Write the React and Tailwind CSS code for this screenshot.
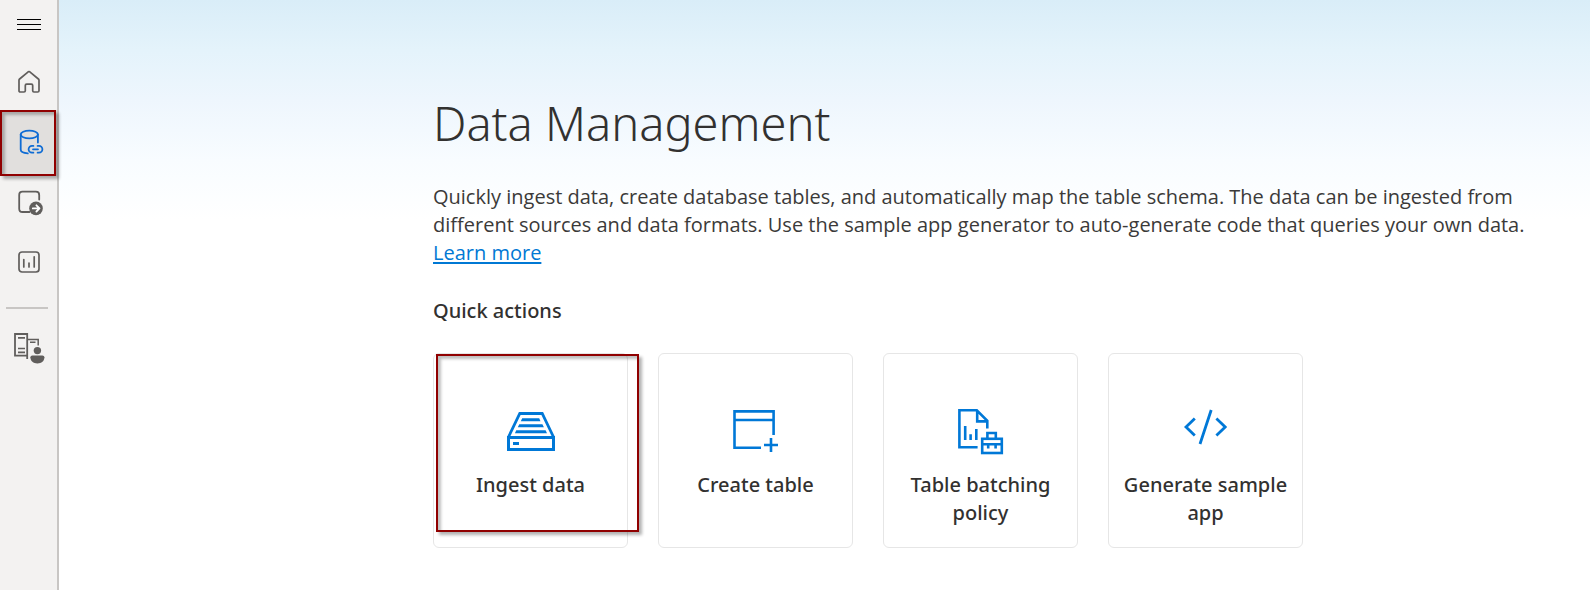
import React from "react";

const IngestIcon = () => (
  <svg className="h-[46px] w-[51px]" viewBox="0 0 51 46" fill="none" stroke="#0078d7" aria-hidden="true">
    <rect x="3.5" y="28.5" width="45" height="12" strokeWidth="3" />
    <path d="M3.5 28L14.8 4.5H37.2L48.5 28" strokeWidth="2.8" />
    <path d="M17.2 9.2H34.2L35.5 12.2H15.8ZM14.3 15.2H37.4L38.9 18.2H12.8ZM11.3 21.2H40.6L42 24.2H9.9ZM8 33H14V36H8Z" fill="#0078d7" stroke="none" />
  </svg>
);

const CreateTableIcon = () => (
  <svg className="h-[46px] w-[51px]" viewBox="0 0 51 46" fill="none" stroke="#0078d7" strokeWidth="2.6" aria-hidden="true">
    <path d="M31 38.8H4.5V2.4H43.6V26M4.5 11H43.6" />
    <path d="M41 29V43M34 36H48" />
  </svg>
);

const BatchingIcon = () => (
  <svg className="h-[46px] w-[51px]" viewBox="0 0 51 46" fill="none" stroke="#0078d7" strokeWidth="2.6" aria-hidden="true">
    <path d="M22.6 38.2H4.4V1.3H21.8L32.3 11.8V19.5M22.2 1.6V12.4H32.6" />
    <path d="M10.2 17V31M15.6 25.2V31M21.3 20V31" />
    <rect x="27.2" y="29.8" width="19.6" height="14.2" />
    <path d="M32.4 29V24H40.8V29M27 35.2H47M33.2 35V39.5M40.6 35V39.5" />
  </svg>
);

const CodeIcon = () => (
  <svg className="h-[46px] w-[51px]" viewBox="0 0 51 46" fill="none" stroke="#0078d7" strokeWidth="2.8" aria-hidden="true">
    <path d="M14.8 9.5L6 18L14.8 26.5M36.4 9.5L45.2 18L36.4 26.5M31.2 1L20 35" />
  </svg>
);

const HomeIcon = () => (
  <svg className="h-6 w-6" viewBox="0 0 24 24" fill="none" stroke="#605e5c" strokeWidth="1.7" strokeLinejoin="round" aria-hidden="true">
    <path d="M2 10.2Q2 9.5 2.6 9L11.2 1.8Q12 1.2 12.8 1.8L21.4 9Q22 9.5 22 10.2V20.7Q22 22 20.7 22H17Q15.7 22 15.7 20.7V15.5Q15.7 14.2 14.4 14.2H9.6Q8.3 14.2 8.3 15.5V20.7Q8.3 22 7 22H3.3Q2 22 2 20.7Z" />
  </svg>
);

const DataIcon = () => (
  <svg className="h-7 w-7" viewBox="0 0 28 28" fill="none" stroke="#0f6cd4" strokeWidth="1.8" strokeLinecap="round" aria-hidden="true">
    <ellipse cx="13.3" cy="6.5" rx="8.6" ry="3.9" />
    <path d="M4.7 6.5V21.6C4.7 23.6 7.8 25.2 11.8 25.4M21.9 6.5V14.5" />
    <path d="M17.4 17.9H16A3.4 3.4 0 0 0 16 24.7H17.4M21.6 17.9H23A3.4 3.4 0 0 1 23 24.7H21.6M17 21.3H22" />
  </svg>
);

const QueryIcon = () => (
  <svg className="h-7 w-7" viewBox="0 0 28 28" fill="none" stroke="#605e5c" strokeWidth="1.8" strokeLinecap="round" aria-hidden="true">
    <path d="M13.5 23H6.5Q3.2 23 3.2 19.7V6Q3.2 2.7 6.5 2.7H19.9Q23.2 2.7 23.2 6V10.5" />
    <circle cx="20" cy="19.4" r="6.8" fill="#605e5c" stroke="none" />
    <path d="M16.8 19.4H23.2M20.4 16.3L23.5 19.4L20.4 22.5" stroke="#fff" strokeLinejoin="round" />
  </svg>
);

const ChartIcon = () => (
  <svg className="h-6 w-6" viewBox="0 0 24 24" fill="none" stroke="#605e5c" strokeWidth="1.7" strokeLinecap="round" aria-hidden="true">
    <rect x="2" y="2" width="20" height="20" rx="3" />
    <path d="M6.8 9.5V17M12 13V17M17.2 6.8V17" />
  </svg>
);

const AdminIcon = () => (
  <svg className="h-8 w-8" viewBox="0 0 32 32" fill="none" stroke="#605e5c" strokeWidth="1.8" aria-hidden="true">
    <path d="M2 2H14.2V23.6H2ZM14.2 23V27" />
    <path d="M5 5.8H12M5 16.5H12M5 20.3H12" strokeWidth="1.7" />
    <path d="M14.5 7.4H25.2V13.5M17 10.3H22.5" strokeWidth="1.5" />
    <circle cx="24.4" cy="18.6" r="3.7" fill="#605e5c" stroke="none" />
    <path d="M19.4 23.4H29.4Q31.4 23.4 31.4 25.2C31.4 29 28.5 31.4 24.4 31.4S17.4 29 17.4 25.2Q17.4 23.4 19.4 23.4Z" fill="#605e5c" stroke="none" />
  </svg>
);

const actions = [
  { label: "Ingest data", Icon: IngestIcon, highlighted: true },
  { label: "Create table", Icon: CreateTableIcon },
  { label: "Table batching policy", Icon: BatchingIcon },
  { label: "Generate sample app", Icon: CodeIcon },
];

const Highlight = ({ className }) => (
  <span
    aria-hidden="true"
    className={`pointer-events-none absolute z-10 border-2 border-[#900000] shadow-[3px_3px_3px_rgba(0,0,0,0.3),inset_3px_3px_3px_rgba(0,0,0,0.25)] ${className}`}
  />
);

function NavItem({ label, children, className }) {
  return (
    <a href="#" aria-label={label} className={`flex items-center justify-center ${className}`}>
      {children}
    </a>
  );
}

function Sidebar() {
  return (
    <nav aria-label="Main" className="flex w-[59px] shrink-0 flex-col border-r-2 border-[#c8c6c4] bg-[#f3f2f1]">
      <button type="button" aria-label="Toggle navigation" className="flex h-[50px] items-center justify-center">
        <svg className="h-3 w-6" viewBox="0 0 24 12" stroke="#000" strokeWidth="1" aria-hidden="true">
          <path d="M0 .5H24M0 5.5H24M0 10.5H24" />
        </svg>
      </button>
      <NavItem label="Home" className="h-[60px] pt-1"><HomeIcon /></NavItem>
      <div className="relative h-[66px]">
        <NavItem label="Data" className="h-full bg-[#e1dfdd] pl-0.5 pb-0.5"><DataIcon /></NavItem>
        <Highlight className="inset-y-0 left-0 right-px" />
      </div>
      <NavItem label="Query" className="h-[56px] pl-0.5 pb-0.5"><QueryIcon /></NavItem>
      <NavItem label="Dashboards" className="h-[60px]"><ChartIcon /></NavItem>
      <hr className="mx-1.5 mt-[15px] mr-[9px] h-0 border-t-2 border-[#c8c6c4]" />
      <NavItem label="My cluster" className="h-[78px]"><AdminIcon /></NavItem>
    </nav>
  );
}

export default function App() {
  return (
    <div className="flex min-h-screen bg-white font-['Noto_Sans','Open_Sans',sans-serif] text-[#323130]">
      <Sidebar />
      <main className="min-w-0 flex-1 bg-[linear-gradient(180deg,#d9edf8_0px,#e4f3fb_50px,#eef6fd_100px,#f8fcff_160px,#ffffff_220px)] pr-12 pb-10 pl-[374px]">
        <h1 className="pt-[91px] text-[47px] leading-[64px] font-light">Data Management</h1>
        <p className="mt-7 font-['Open_Sans','Noto_Sans',sans-serif] text-[20px] leading-7 text-[#3b3a39]">
          Quickly ingest data, create database tables, and automatically map the table schema. The data can be ingested from
          different sources and data formats. Use the sample app generator to auto-generate code that queries your own data.{" "}
          <a href="#" className="text-[#0078d4] underline decoration-2 underline-offset-2">Learn more</a>
        </p>
        <h2 className="mt-[30px] text-[20px] leading-7 font-medium">Quick actions</h2>
        <div className="mt-7 flex flex-wrap gap-[30px]">
          {actions.map(({ label, Icon, highlighted }) => (
            <div key={label} className="relative">
              <button
                type="button"
                className="flex h-[195px] w-[195px] flex-col items-center rounded-md border border-[#e6e6e6] bg-white px-2 pt-[55px] text-[20px] leading-7 font-medium"
              >
                <Icon />
                <span className="mt-4">{label}</span>
              </button>
              {highlighted && <Highlight className="top-px left-[3px] h-[178px] w-[203px]" />}
            </div>
          ))}
        </div>
      </main>
    </div>
  );
}
